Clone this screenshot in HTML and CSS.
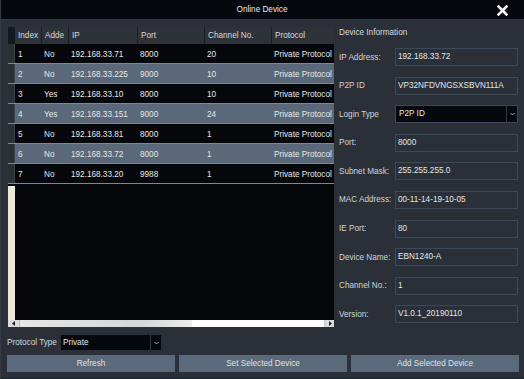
FILE: index.html
```html
<!DOCTYPE html>
<html>
<head>
<meta charset="utf-8">
<link rel="stylesheet" href="styles.css">
</head>
<body>
<div class="window">
  <div class="titlebar">
    <span></span>
    <span class="title">Online Device</span>
    <span class="close-wrap">
      <svg class="close" width="11" height="11" viewBox="0 0 11 11"><path d="M1.5 1.5L9.5 9.5M9.5 1.5L1.5 9.5" stroke="#f2f2f2" stroke-width="2.6" stroke-linecap="square"/></svg>
    </span>
  </div>
  <div class="content">
    <div class="left">
      <div class="table">
        <div class="thead">
          <div class="th corner"></div>
          <div class="th first">Index</div>
          <div class="th">Adde</div>
          <div class="th">IP</div>
          <div class="th">Port</div>
          <div class="th">Channel No.</div>
          <div class="th">Protocol</div>
        </div>
        <div class="tr"><div class="td rh"></div><div class="td">1</div><div class="td">No</div><div class="td">192.168.33.71</div><div class="td">8000</div><div class="td">20</div><div class="td">Private Protocol</div></div>
        <div class="tr sel"><div class="td rh"></div><div class="td">2</div><div class="td">No</div><div class="td">192.168.33.225</div><div class="td">9000</div><div class="td">10</div><div class="td">Private Protocol</div></div>
        <div class="tr"><div class="td rh"></div><div class="td">3</div><div class="td">Yes</div><div class="td">192.168.33.10</div><div class="td">8000</div><div class="td">10</div><div class="td">Private Protocol</div></div>
        <div class="tr sel"><div class="td rh"></div><div class="td">4</div><div class="td">Yes</div><div class="td">192.168.33.151</div><div class="td">9000</div><div class="td">24</div><div class="td">Private Protocol</div></div>
        <div class="tr"><div class="td rh"></div><div class="td">5</div><div class="td">No</div><div class="td">192.168.33.81</div><div class="td">8000</div><div class="td">1</div><div class="td">Private Protocol</div></div>
        <div class="tr sel"><div class="td rh"></div><div class="td">6</div><div class="td">No</div><div class="td">192.168.33.72</div><div class="td">8000</div><div class="td">1</div><div class="td">Private Protocol</div></div>
        <div class="tr"><div class="td rh"></div><div class="td">7</div><div class="td">No</div><div class="td">192.168.33.20</div><div class="td">9988</div><div class="td">1</div><div class="td">Private Protocol</div></div>
        <div class="filler"><div class="cream"></div><div class="blank"></div></div>
        <div class="hscroll">
          <div class="sbtn left-btn"><svg width="4" height="5" viewBox="0 0 4 5"><path d="M3 0L0 2.5L3 5Z" fill="#222"/></svg></div>
          <div class="thumb"></div>
          <div class="track"></div>
          <div class="sbtn right-btn"><svg width="4" height="5" viewBox="0 0 4 5"><path d="M1 0L4 2.5L1 5Z" fill="#222"/></svg></div>
        </div>
      </div>
    </div>
    <div class="right">
      <div class="info-title">Device Information</div>
      <div class="fields">
        <div class="field"><span class="label">IP Address:</span><span class="input">192.168.33.72</span></div>
        <div class="field"><span class="label">P2P ID</span><span class="input">VP32NFDVNGSXSBVN111A</span></div>
        <div class="field"><span class="label">Login Type</span><span class="input select"><span class="val">P2P ID</span><span class="arrow"><svg width="5" height="4" viewBox="0 0 5 4"><path d="M0.5 1L2.5 3L4.5 1" stroke="#9aa3ad" stroke-width="1" fill="none"/></svg></span></span></div>
        <div class="field"><span class="label">Port:</span><span class="input">8000</span></div>
        <div class="field"><span class="label">Subnet Mask:</span><span class="input">255.255.255.0</span></div>
        <div class="field"><span class="label">MAC Address:</span><span class="input">00-11-14-19-10-05</span></div>
        <div class="field"><span class="label">IE Port:</span><span class="input">80</span></div>
        <div class="field"><span class="label">Device Name:</span><span class="input">EBN1240-A</span></div>
        <div class="field"><span class="label">Channel No.:</span><span class="input">1</span></div>
        <div class="field"><span class="label">Version:</span><span class="input">V1.0.1_20190110</span></div>
      </div>
    </div>
  </div>
  <div class="proto-row">
    <span class="proto-label">Protocol Type</span>
    <span class="proto-select"><span class="val">Private</span><span class="arrow"><svg width="5" height="4" viewBox="0 0 5 4"><path d="M0.5 1L2.5 3L4.5 1" stroke="#9aa3ad" stroke-width="1" fill="none"/></svg></span></span>
  </div>
  <div class="buttons">
    <div class="btn">Refresh</div>
    <div class="btn">Set Selected Device</div>
    <div class="btn">Add Selected Device</div>
  </div>
</div>
</body>
</html>
```
FILE: styles.css
```css
* { box-sizing: border-box; }
html, body { margin: 0; padding: 0; background: #2b3038; }
.window {
  width: 524px;
  height: 379px;
  background: #2b3038;
  font-family: "Liberation Sans", Arial, sans-serif;
  font-size: 8.2px;
  color: #e4e6e8;
  display: flex;
  flex-direction: column;
  overflow: hidden;
  border-left: 1px solid #343b45;
  border-bottom: 1px solid #1c2735;
}
.titlebar {
  height: 20px;
  flex: none;
  background: #05080c;
  display: grid;
  grid-template-columns: 1fr auto 1fr;
  align-items: center;
  border-bottom: 1px solid #333a44;
  margin-left: -1px;
}
.title { color: #e6e8ea; line-height: 20px; }
.close-wrap { justify-self: end; margin-right: 16px; display: flex; }
.content { display: flex; height: 310px; flex: none; }
.left { width: 333px; padding-left: 7px; padding-top: 7px; flex: none; }
.table { width: 326px; display: flex; flex-direction: column; background: #05070a; }
.thead {
  display: grid;
  grid-template-columns: 7px 26px 27px 69px 67px 67px 63px;
  height: 17px;
}
.th {
  background: #2e333a;
  border-left: 1px solid #1b1e23;
  padding-left: 3px;
  line-height: 17px;
  color: #d6d9dc;
  white-space: nowrap;
  overflow: hidden;
}
.th.corner { background: #15181c; border-left: none; padding: 0; }
.th.first { border-left: none; }
.tr {
  display: grid;
  grid-template-columns: 7px 26px 27px 69px 67px 67px 63px;
  height: 20px;
  border-bottom: 1px solid #7f8892;
}
.tr.sel { background: #5a6879; }
.td {
  height: 19px;
  padding-left: 3px;
  padding-top: 1px;
  line-height: 19px;
  white-space: nowrap;
  overflow: hidden;
  color: #e6e8ea;
}
.td.rh { background: #2b3037; border-right: 1px solid #3d434b; padding: 0; }
.filler { height: 136px; display: flex; }
.cream { width: 7px; margin-top: 2px; background: #ece9d8; }
.blank { flex: 1; background: #05070a; }
.hscroll { height: 7px; display: flex; background: #ffffff; }
.sbtn { display: flex; align-items: center; justify-content: center; background: #dcdcdc; }
.left-btn { width: 12px; border-right: 1px solid #b8b8b8; }
.right-btn { width: 10px; border-left: 1px solid #c8c8c8; }
.thumb { width: 172px; background: linear-gradient(to right, #e6e6e6, #d6d6d6 70%, #ececec); }
.track { flex: 1; background: #ffffff; }
.right { flex: 1; padding-left: 5px; padding-top: 4px; display: flex; flex-direction: column; }
.info-title { height: 17px; line-height: 17px; color: #d6d9dc; }
.fields { margin-top: 7px; display: flex; flex-direction: column; gap: 10.6px; }
.field { display: flex; align-items: center; height: 18px; }
.label { width: 56px; flex: none; color: #cfd3d7; white-space: nowrap; }
.input {
  width: 123px;
  height: 18px;
  border: 1px solid #3a4a5b;
  padding-left: 2px;
  line-height: 16px;
  color: #e2e5e8;
  white-space: nowrap;
  overflow: hidden;
}
.input.select { background: #05080c; display: flex; padding-left: 0; }
.select .val { flex: 1; padding-left: 3px; }
.arrow { width: 11px; border-left: 1px solid #2f3a46; display: flex; align-items: center; justify-content: center; }
.proto-row { margin-top: 4px; height: 17px; padding-left: 6px; display: flex; align-items: center; flex: none; }
.proto-label { width: 53px; color: #d6d9dc; white-space: nowrap; }
.proto-select {
  width: 102px;
  height: 17px;
  background: #05080c;
  border: 1px solid #243140;
  display: flex;
  line-height: 15px;
}
.proto-select .val { flex: 1; padding-left: 2px; color: #e2e5e8; }
.buttons { margin-top: 4px; height: 17px; display: flex; gap: 4px; padding-left: 6px; padding-right: 5px; flex: none; }
.btn {
  flex: 1;
  background: #5b6a7a;
  color: #dfe3e8;
  text-align: center;
  line-height: 17px;
}
```
